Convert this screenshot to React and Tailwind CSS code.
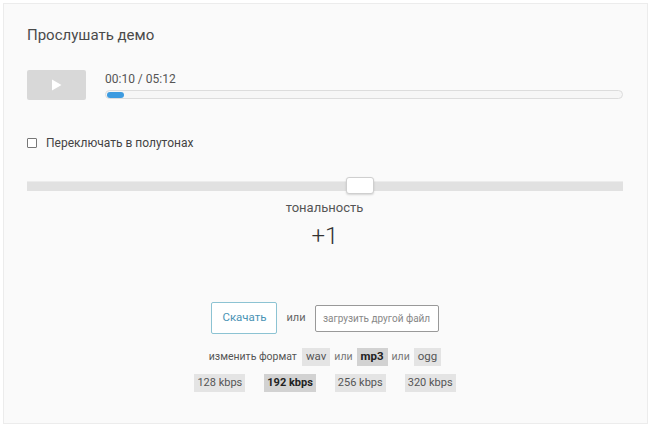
import React from 'react';

const formats = [
  { label: 'wav', active: false },
  { label: 'mp3', active: true },
  { label: 'ogg', active: false },
];

const bitrates = [
  { label: '128 kbps', active: false },
  { label: '192 kbps', active: true },
  { label: '256 kbps', active: false },
  { label: '320 kbps', active: false },
];

const App = () => {
  return (
    <div className="w-[650px] h-[430px] overflow-hidden bg-white pt-[3px] pl-[3px] font-['Roboto','Liberation_Sans',sans-serif]">
      <div className="w-[645px] h-[421px] bg-[#fafafa] border border-[#ececec] pl-[23px] pr-[24px] pt-[21px] flex flex-col">
        {/* Title */}
        <h2 className="text-[15px] leading-[20px] text-[#4a4a4a] font-normal">Прослушать демо</h2>

        {/* Player */}
        <div className="mt-[25px] flex items-start gap-[19px]">
          <button className="w-[59px] h-[30px] bg-[#d8d8d8] rounded-[2px] flex items-center justify-center shrink-0">
            <svg width="11" height="12" viewBox="0 0 11 12">
              <path d="M1 0.5 L10.5 6 L1 11.5 Z" fill="#ffffff" />
            </svg>
          </button>
          <div className="flex-1 flex flex-col pt-[1px]">
            <span className="text-[12px] leading-[16px] text-[#555]">00:10 / 05:12</span>
            <div className="mt-[3px] h-[9px] rounded-full border border-[#dcdcdc] bg-[#f6f6f6] flex items-center px-[1px]">
              <div className="h-[6px] rounded-full bg-[#3d9be0]" style={{ width: '17px' }} />
            </div>
          </div>
        </div>

        {/* Checkbox */}
        <label className="mt-[35px] flex items-center gap-[9px] text-[12px] leading-[16px] text-[#444]">
          <span className="w-[10px] h-[10px] border border-[#777] bg-white rounded-[1px] shrink-0" />
          Переключать в полутонах
        </label>

        {/* Slider */}
        <div className="mt-[26px] relative h-[17px] flex items-center">
          <div className="w-full h-[10px] bg-[#e1e1e1] border-t border-[#ececec]" />
          <div className="absolute left-[319px] top-0 w-[28px] h-[17px] bg-white border border-[#cfcfcf] rounded-[3px] shadow-[0_1px_2px_rgba(0,0,0,0.15)]" />
        </div>
        <div className="mt-[5px] text-center text-[13px] leading-[18px] text-[#555] pr-[1px]">тональность</div>
        <div className="mt-[5px] text-center text-[24px] leading-[28px] text-[#333] font-light">+1</div>

        {/* Actions */}
        <div className="mt-[52px] flex items-center justify-center gap-[9px]">
          <button className="w-[66px] h-[32px] border-[1.5px] border-[#8cc3d3] rounded-[2px] bg-white text-[11.5px] text-[#4a93b5]">
            Скачать
          </button>
          <span className="text-[11px] text-[#666]">или</span>
          <button className="w-[124px] h-[27px] border border-[#999] rounded-[2px] bg-white text-[10px] text-[#888]">
            загрузить другой файл
          </button>
        </div>

        <div className="mt-[14px] flex items-center justify-center gap-[4px] text-[10.5px] text-[#555]">
          <span className="mr-[1px]">изменить формат</span>
          {formats.map((f, i) => (
            <React.Fragment key={f.label}>
              {i > 0 && <span className="text-[#777]">или</span>}
              <span
                className={`h-[18px] px-[4px] flex items-center text-[11.5px] ${
                  f.active ? 'bg-[#d2d2d2] text-[#222] font-bold' : 'bg-[#e4e4e4] text-[#555]'
                }`}
              >
                {f.label}
              </span>
            </React.Fragment>
          ))}
        </div>

        <div className="mt-[8px] flex items-center justify-center gap-[19px]">
          {bitrates.map((b) => (
            <span
              key={b.label}
              className={`h-[18px] px-[3px] flex items-center text-[11px] ${
                b.active ? 'bg-[#d2d2d2] text-[#222] font-bold' : 'bg-[#e4e4e4] text-[#555]'
              }`}
            >
              {b.label}
            </span>
          ))}
        </div>
      </div>
    </div>
  );
};

export default App;
